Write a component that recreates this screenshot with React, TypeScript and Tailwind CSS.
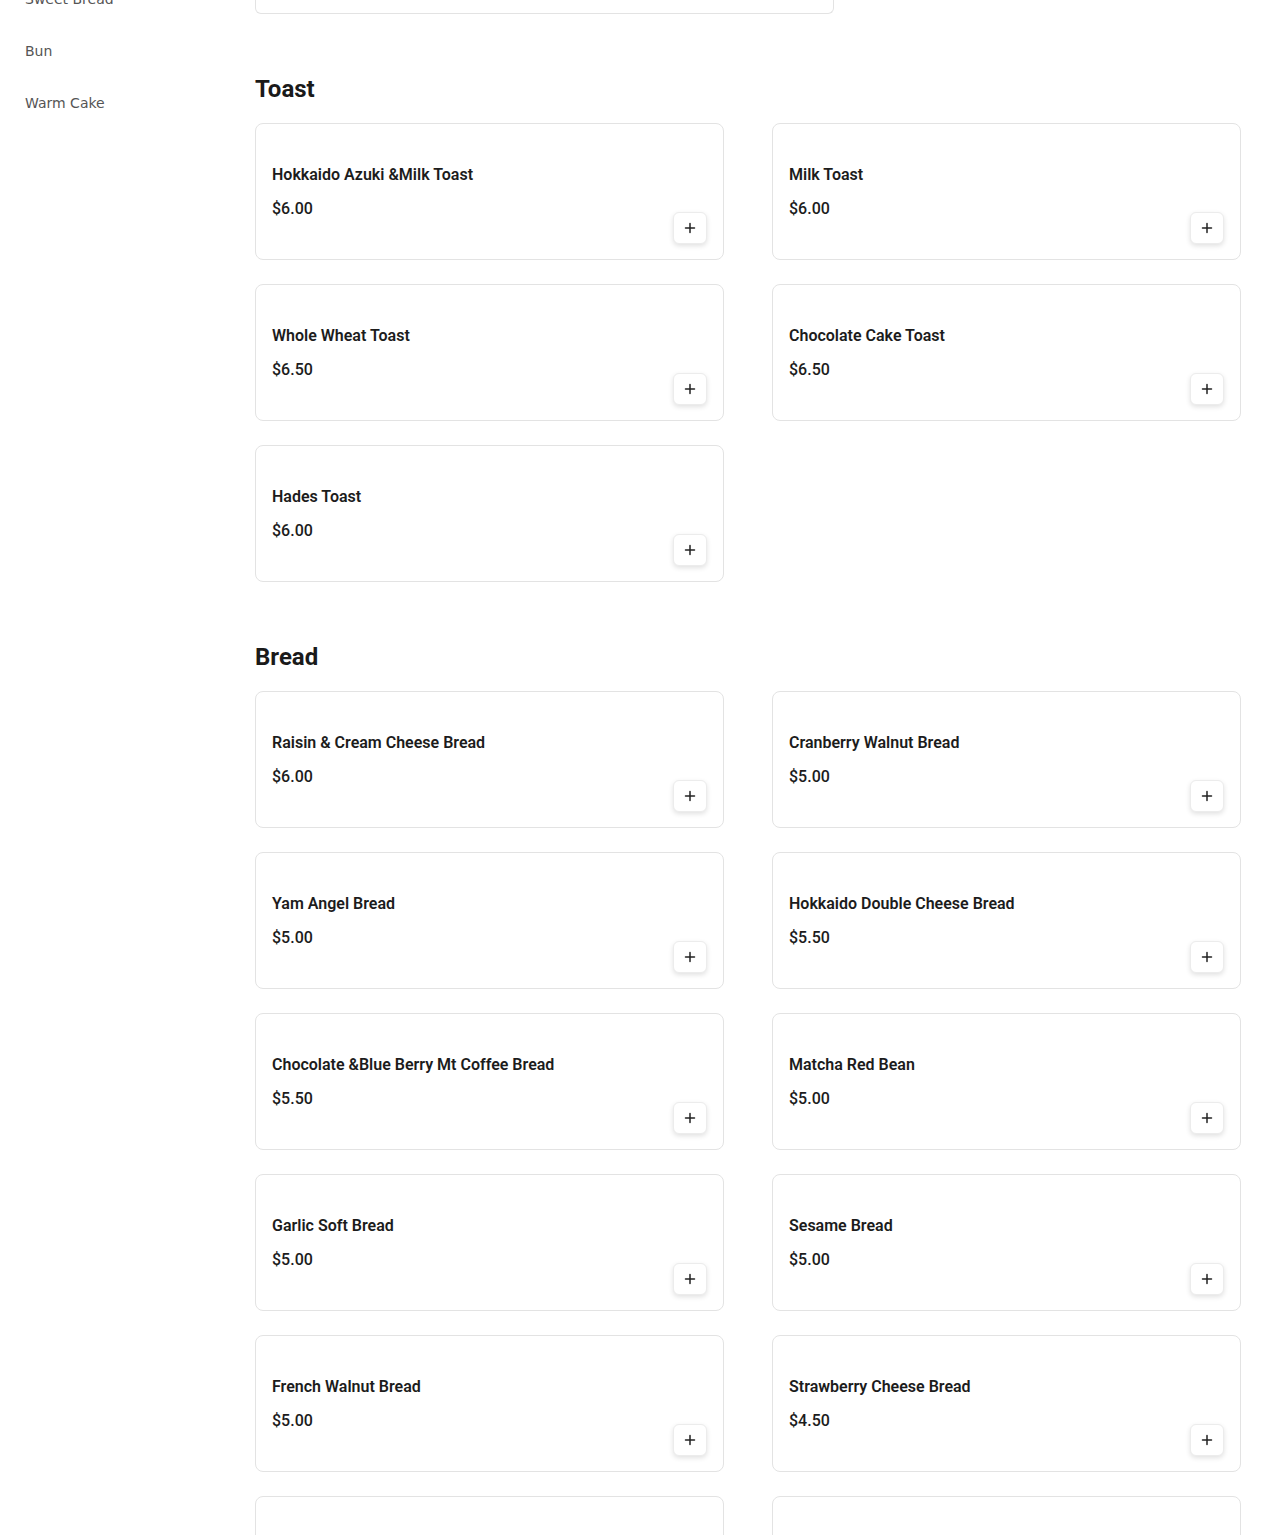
import React from "react";

type Item = { name: string; price: string };

const toast: Item[] = [
  { name: "Hokkaido Azuki &Milk Toast", price: "$6.00" },
  { name: "Milk Toast", price: "$6.00" },
  { name: "Whole Wheat Toast", price: "$6.50" },
  { name: "Chocolate Cake Toast", price: "$6.50" },
  { name: "Hades Toast", price: "$6.00" },
];

const bread: Item[] = [
  { name: "Raisin & Cream Cheese Bread", price: "$6.00" },
  { name: "Cranberry Walnut Bread", price: "$5.00" },
  { name: "Yam Angel Bread", price: "$5.00" },
  { name: "Hokkaido Double Cheese Bread", price: "$5.50" },
  { name: "Chocolate &Blue Berry Mt Coffee Bread", price: "$5.50" },
  { name: "Matcha Red Bean", price: "$5.00" },
  { name: "Garlic Soft Bread", price: "$5.00" },
  { name: "Sesame Bread", price: "$5.00" },
  { name: "French Walnut Bread", price: "$5.00" },
  { name: "Strawberry Cheese Bread", price: "$4.50" },
  { name: "Coconut Bread", price: "$5.00" },
  { name: "Pineapple Bread", price: "$5.00" },
];

function PlusIcon() {
  return (
    <svg width="12" height="12" viewBox="0 0 12 12" fill="none">
      <path d="M6 1.5v9M1.5 6h9" stroke="#222" strokeWidth="1.5" strokeLinecap="round" />
    </svg>
  );
}

function Card({ item }: { item: Item }) {
  return (
    <div className="flex h-[137px] justify-between rounded-lg border border-[#e3e3e3] bg-white pl-4 pr-4 pb-[15px]">
      <div className="flex flex-col pt-[39px]">
        <div className="h-6 text-[16px] leading-6 font-semibold text-[#1c1c1c]">{item.name}</div>
        <div className="mt-[10px] h-6 text-[16px] leading-6 font-medium text-[#1c1c1c]">{item.price}</div>
      </div>
      <button className="flex h-8 w-[34px] items-center justify-center self-end rounded-md border border-[#ececec] bg-white shadow-[0_2px_5px_rgba(0,0,0,0.12)]">
        <PlusIcon />
      </button>
    </div>
  );
}

function Section({ title, items }: { title: string; items: Item[] }) {
  return (
    <section className="mt-[59px]">
      <h2 className="mb-[18px] h-8 text-[24px] leading-8 font-bold text-[#1a1a1a]">{title}</h2>
      <div className="grid grid-cols-2 gap-x-12 gap-y-6">
        {items.map((it) => (
          <Card key={it.name} item={it} />
        ))}
      </div>
    </section>
  );
}

export default function App() {
  return (
    <div
      className="flex min-h-screen bg-white"
      style={{ fontFamily: "Roboto, 'Liberation Sans', sans-serif" }}
    >
      <aside className="w-[255px] shrink-0 pl-[25px]">
        <nav className="-mt-[27px] flex flex-col" style={{ fontFamily: "'DejaVu Sans', sans-serif" }}>
          {["Sweet Bread", "Bun", "Warm Cake"].map((c) => (
            <div key={c} className="flex h-[52px] items-center text-[14px] text-[#555555]">
              {c}
            </div>
          ))}
        </nav>
      </aside>
      <main className="w-[986px] shrink-0">
        <div className="h-[14px] w-[579px] rounded-b-md border border-t-0 border-[#e3e3e3]" />
        <Section title="Toast" items={toast} />
        <Section title="Bread" items={bread} />
      </main>
    </div>
  );
}
